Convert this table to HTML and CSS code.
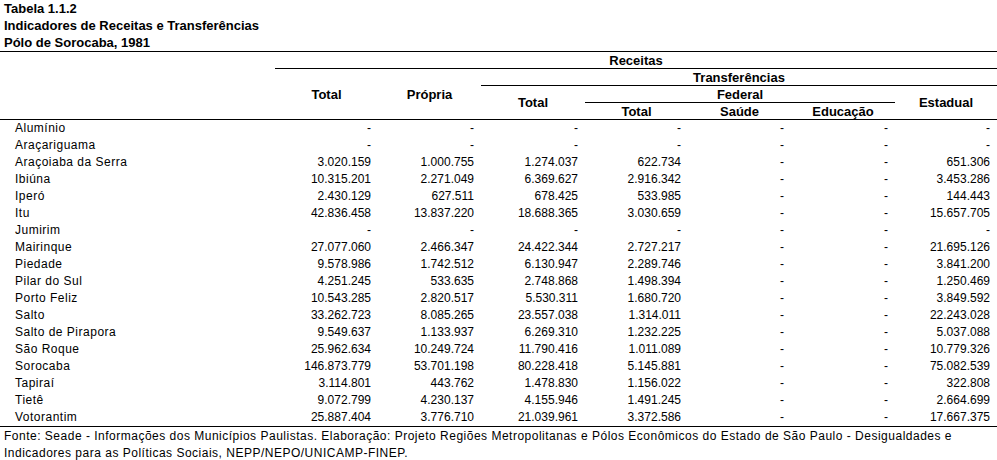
FILE: index.html
```html
<!DOCTYPE html>
<html lang="pt">
<head>
<meta charset="utf-8">
<title>Tabela 1.1.2</title>
<link rel="stylesheet" href="styles.css">
</head>
<body>
<div class="title">
  <div>Tabela 1.1.2</div>
  <div>Indicadores de Receitas e Transferências</div>
  <div>Pólo de Sorocaba, 1981</div>
</div>
<table class="data">
  <colgroup>
    <col class="c-name"><col class="c-n"><col class="c-n"><col class="c-w"><col class="c-n"><col class="c-n"><col class="c-w"><col class="c-e">
  </colgroup>
  <thead>
    <tr class="h1">
      <th rowspan="4"></th>
      <th colspan="7" class="line">Receitas</th>
    </tr>
    <tr class="h2">
      <th rowspan="3">Total</th>
      <th rowspan="3">Própria</th>
      <th colspan="5" class="line">Transferências</th>
    </tr>
    <tr class="h3">
      <th rowspan="2">Total</th>
      <th colspan="3" class="line">Federal</th>
      <th rowspan="2">Estadual</th>
    </tr>
    <tr class="h4">
      <th>Total</th>
      <th>Saúde</th>
      <th>Educação</th>
    </tr>
  </thead>
  <tbody>
    <tr><td>Alumínio</td><td>-</td><td>-</td><td>-</td><td>-</td><td>-</td><td>-</td><td>-</td></tr>
    <tr><td>Araçariguama</td><td>-</td><td>-</td><td>-</td><td>-</td><td>-</td><td>-</td><td>-</td></tr>
    <tr><td>Araçoiaba da Serra</td><td>3.020.159</td><td>1.000.755</td><td>1.274.037</td><td>622.734</td><td>-</td><td>-</td><td>651.306</td></tr>
    <tr><td>Ibiúna</td><td>10.315.201</td><td>2.271.049</td><td>6.369.627</td><td>2.916.342</td><td>-</td><td>-</td><td>3.453.286</td></tr>
    <tr><td>Iperó</td><td>2.430.129</td><td>627.511</td><td>678.425</td><td>533.985</td><td>-</td><td>-</td><td>144.443</td></tr>
    <tr><td>Itu</td><td>42.836.458</td><td>13.837.220</td><td>18.688.365</td><td>3.030.659</td><td>-</td><td>-</td><td>15.657.705</td></tr>
    <tr><td>Jumirim</td><td>-</td><td>-</td><td>-</td><td>-</td><td>-</td><td>-</td><td>-</td></tr>
    <tr><td>Mairinque</td><td>27.077.060</td><td>2.466.347</td><td>24.422.344</td><td>2.727.217</td><td>-</td><td>-</td><td>21.695.126</td></tr>
    <tr><td>Piedade</td><td>9.578.986</td><td>1.742.512</td><td>6.130.947</td><td>2.289.746</td><td>-</td><td>-</td><td>3.841.200</td></tr>
    <tr><td>Pilar do Sul</td><td>4.251.245</td><td>533.635</td><td>2.748.868</td><td>1.498.394</td><td>-</td><td>-</td><td>1.250.469</td></tr>
    <tr><td>Porto Feliz</td><td>10.543.285</td><td>2.820.517</td><td>5.530.311</td><td>1.680.720</td><td>-</td><td>-</td><td>3.849.592</td></tr>
    <tr><td>Salto</td><td>33.262.723</td><td>8.085.265</td><td>23.557.038</td><td>1.314.011</td><td>-</td><td>-</td><td>22.243.028</td></tr>
    <tr><td>Salto de Pirapora</td><td>9.549.637</td><td>1.133.937</td><td>6.269.310</td><td>1.232.225</td><td>-</td><td>-</td><td>5.037.088</td></tr>
    <tr><td>São Roque</td><td>25.962.634</td><td>10.249.724</td><td>11.790.416</td><td>1.011.089</td><td>-</td><td>-</td><td>10.779.326</td></tr>
    <tr><td>Sorocaba</td><td>146.873.779</td><td>53.701.198</td><td>80.228.418</td><td>5.145.881</td><td>-</td><td>-</td><td>75.082.539</td></tr>
    <tr><td>Tapiraí</td><td>3.114.801</td><td>443.762</td><td>1.478.830</td><td>1.156.022</td><td>-</td><td>-</td><td>322.808</td></tr>
    <tr><td>Tietê</td><td>9.072.799</td><td>4.230.137</td><td>4.155.946</td><td>1.491.245</td><td>-</td><td>-</td><td>2.664.699</td></tr>
    <tr><td>Votorantim</td><td>25.887.404</td><td>3.776.710</td><td>21.039.961</td><td>3.372.586</td><td>-</td><td>-</td><td>17.667.375</td></tr>
  </tbody>
</table>
<div class="source">
  Fonte: Seade - Informações dos Municípios Paulistas. Elaboração: Projeto Regiões Metropolitanas e Pólos Econômicos do Estado de São Paulo - Desigualdades e<br>
  Indicadores para as Políticas Sociais, NEPP/NEPO/UNICAMP-FINEP.
</div>
</body>
</html>
```

FILE: styles.css
```css
html, body {
  margin: 0;
  padding: 0;
  background: #fff;
  color: #000;
}
body {
  width: 997px;
  font-family: "Liberation Sans", Arial, sans-serif;
  font-size: 12px;
}
.title {
  font-family: "Liberation Sans", Arial, sans-serif;
  font-weight: bold;
  font-size: 13px;
  line-height: 17px;
  padding: 0 0 0 4px;
  height: 51px;
}
table.data {
  width: 997px;
  border-collapse: collapse;
  table-layout: fixed;
  border-top: 1px solid #000;
}
col.c-name { width: 275px; }
col.c-n { width: 103px; }
col.c-w { width: 104px; }
col.c-e { width: 102px; }
thead {
  border-bottom: 1px solid #000;
}
th {
  font-family: "Liberation Sans", Arial, sans-serif;
  font-weight: bold;
  font-size: 13px;
  padding: 0;
  text-align: center;
  vertical-align: middle;
  line-height: 15px;
}
tr.h1 th, tr.h2 th, tr.h3 th, tr.h4 th { height: 16px; }
th.line {
  border-bottom: 1px solid #000;
}
tbody {
  border-bottom: 1px solid #000;
}
td {
  padding: 0 7px 0 0;
  height: 17px;
  line-height: 17px;
  text-align: right;
  white-space: nowrap;
}
td:first-child {
  text-align: left;
  padding: 0 0 0 15px;
  letter-spacing: 0.5px;
}
.source {
  padding: 1px 0 0 4px;
  line-height: 17px;
  letter-spacing: 0.5px;
}
```
